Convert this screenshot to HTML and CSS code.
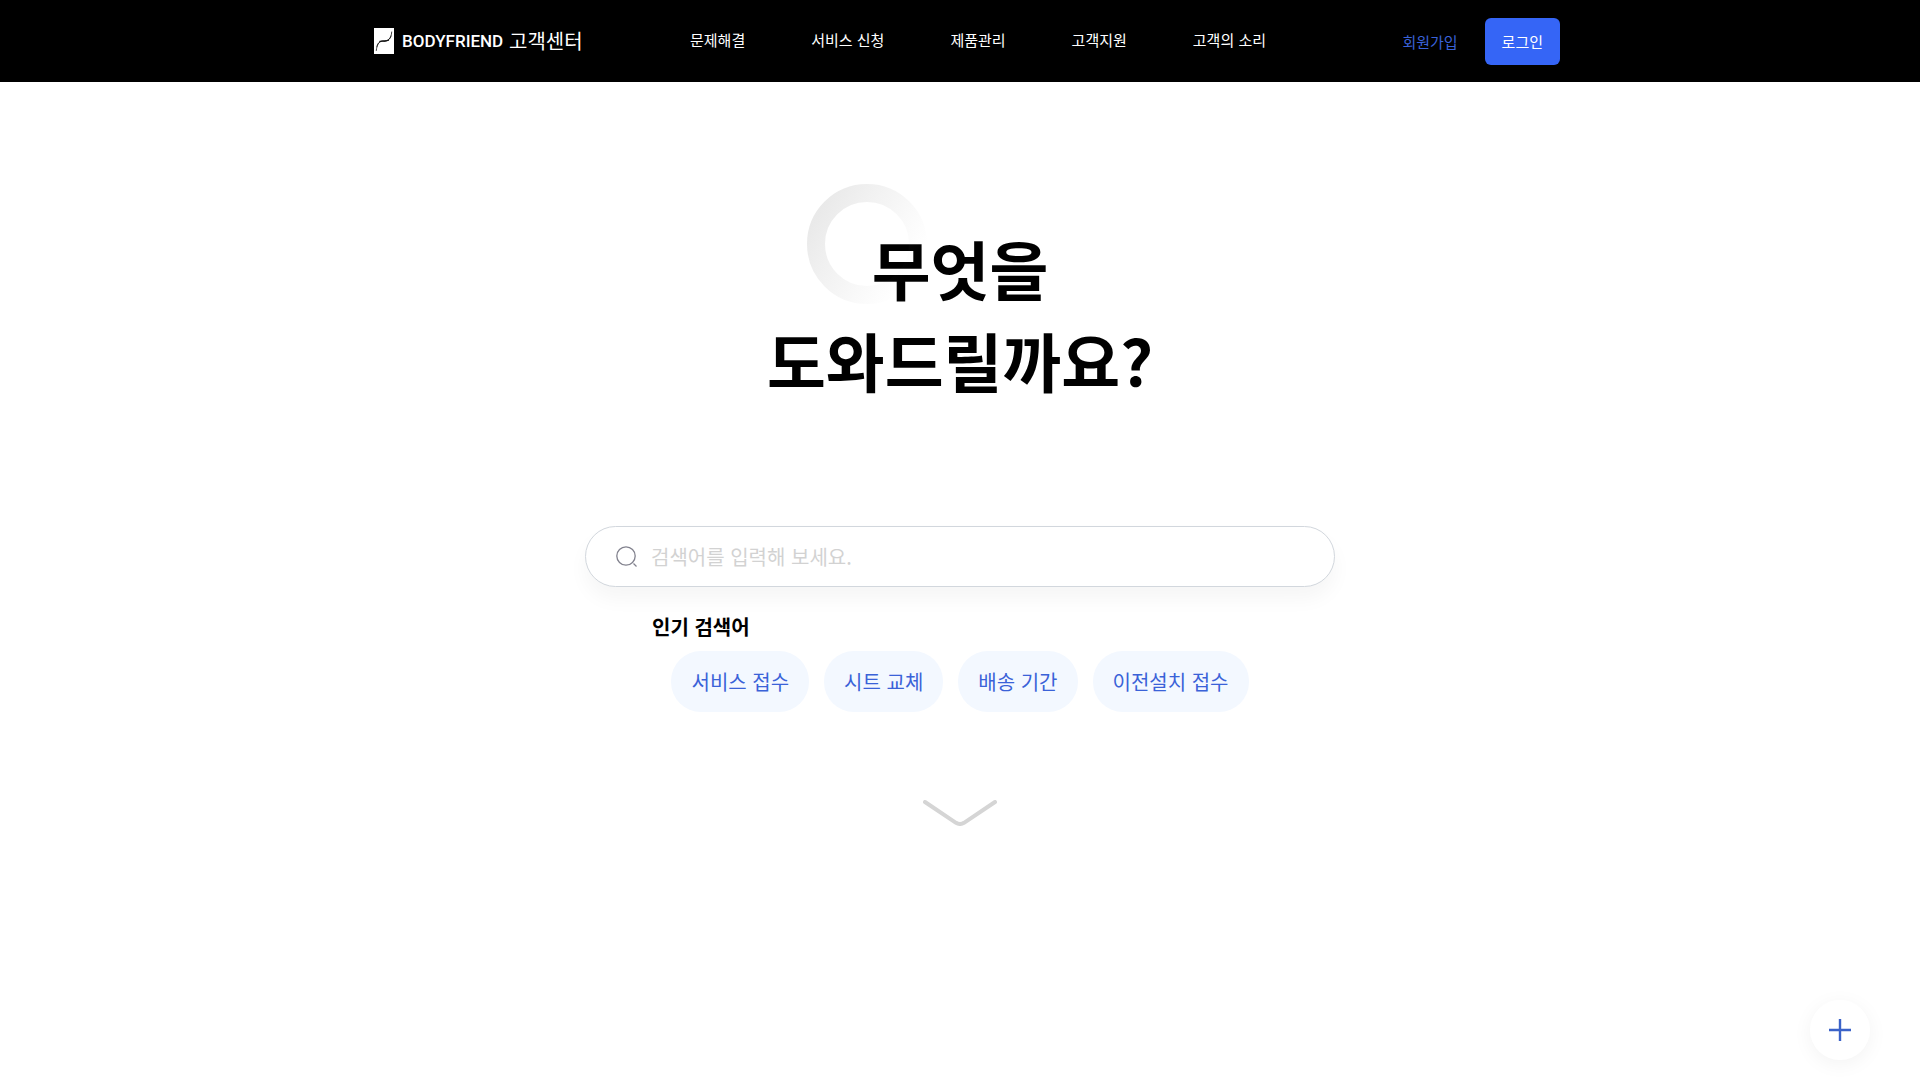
FILE: index.html
```html
<!DOCTYPE html>
<html lang="ko">

<head>
  <meta charset="UTF-8">
  <meta name="viewport" content="width=device-width, initial-scale=1.0">
  <title>BODYFRIEND 고객센터</title>
  <link rel="stylesheet" href="styles.css">
</head>

<body>
  <header class="header">
    <div class="header__inner">
      <a class="logo" href="#">
        <svg class="logo__mark" viewBox="0 0 20 26" aria-hidden="true">
          <rect width="20" height="26" fill="#fff" />
          <g fill="none" stroke="#111" stroke-linecap="round">
            <path d="M2.300 22.500C3 16.500 4.500 13.200 9 13C14 13 17.300 11 17.700 4" stroke-width=".8" />
            <path d="M3 18.500C4 14.500 6 13 10 13.200C14 13.200 16 11.500 17 8" stroke-width=".8" />
            <path d="M6 13.400C8 12.400 11.500 13.800 14.500 12.300" stroke-width="1.2" />
          </g>
        </svg>
        <span class="logo__name">BODYFRIEND</span>
        <span class="logo__sub">고객센터</span>
      </a>
      <nav class="nav">
        <a href="#">문제해결</a>
        <a href="#">서비스 신청</a>
        <a href="#">제품관리</a>
        <a href="#">고객지원</a>
        <a href="#">고객의 소리</a>
      </nav>
      <div class="member">
        <a class="member__join" href="#">회원가입</a>
        <button class="member__login" type="button">로그인</button>
      </div>
    </div>
  </header>

  <main class="main">
    <div class="title">
      <h1>무엇을<br>도와드릴까요?</h1>
      <svg class="title__ring" viewBox="0 0 120 120" aria-hidden="true">
        <defs>
          <linearGradient id="ring" x1="0" y1="0.25" x2="0.9" y2="0.8">
            <stop offset="0" stop-color="#888" stop-opacity=".18" />
            <stop offset=".5" stop-color="#999" stop-opacity=".1" />
            <stop offset="1" stop-color="#aaa" stop-opacity="0" />
          </linearGradient>
        </defs>
        <circle cx="60" cy="60" r="51" fill="none" stroke="url(#ring)" stroke-width="18" />
      </svg>
    </div>

    <form class="search">
      <label for="keyword" aria-label="검색">
        <svg class="search__icon" viewBox="0 0 21 21" fill="none" stroke="#82828e" stroke-width="1.3" aria-hidden="true">
          <circle cx="10" cy="10" r="9.200" />
          <path d="M17.500 17.500L20.500 20.500" />
        </svg>
      </label>
      <input id="keyword" type="text" placeholder="검색어를 입력해 보세요.">
    </form>

    <section class="popular">
      <h2>인기 검색어</h2>
      <div class="popular__list">
        <a href="#">서비스 접수</a>
        <a href="#">시트 교체</a>
        <a href="#">배송 기간</a>
        <a href="#">이전설치 접수</a>
      </div>
    </section>

    <svg class="arrow" viewBox="0 0 74 26" fill="none" stroke="#d5d5d5" stroke-width="4" stroke-linecap="round" aria-hidden="true">
      <path d="M2 2L33 22.800Q37 25.200 41 22.800L72 2" />
    </svg>
  </main>

  <button class="plus" type="button" aria-label="더보기">
    <svg viewBox="0 0 22 22" stroke="#3a62c8" stroke-width="2.4" aria-hidden="true">
      <path d="M11 0V22M0 11H22" />
    </svg>
  </button>
</body>

</html>
```
FILE: styles.css
```css
* {
  box-sizing: border-box;
  margin: 0;
  padding: 0;
}

body {
  min-height: 100vh;
  font-family: "Noto Sans CJK KR", sans-serif;
  color: #000;
  background-color: #fff;
}

a {
  color: inherit;
  text-decoration: none;
}

button,
input {
  border: 0;
  font-family: inherit;
}

svg {
  display: block;
}

.header {
  color: #fff;
  background-color: #000;
}

.header__inner {
  display: flex;
  align-items: center;
  max-width: 1200px;
  height: 82px;
  margin: 0 auto;
  padding-left: 14px;
}

.logo {
  display: flex;
  align-items: center;
  width: 316px;
}

.logo__mark {
  width: 20px;
  height: 26px;
  margin-right: 8px;
}

.logo__name {
  width: 107px;
  font-family: Roboto, sans-serif;
  font-size: 17px;
  font-weight: 500;
}

.logo__sub {
  font-size: 20px;
  line-height: 26px;
  font-weight: 400;
}

.nav {
  display: flex;
  gap: 66px;
  padding-bottom: 3px;
  font-size: 15px;
}

.member {
  display: flex;
  align-items: center;
  gap: 27px;
  margin-left: auto;
  font-size: 15px;
}

.member__join {
  color: #3a62d8;
}

.member__login {
  height: 47px;
  padding: 0 17px;
  border-radius: 6px;
  font-size: 15px;
  color: #fff;
  background-color: #3565f6;
}

.main {
  display: flex;
  flex-direction: column;
  align-items: center;
  padding: 139px 20px 0;
}

.title {
  position: relative;
}

.title h1 {
  font-size: 64px;
  line-height: 92px;
  font-weight: 700;
  text-align: center;
}

.title__ring {
  position: absolute;
  top: -37px;
  left: 40px;
  width: 120px;
}

.search {
  display: flex;
  align-items: center;
  gap: 14px;
  width: 100%;
  max-width: 750px;
  height: 61px;
  margin-top: 121px;
  padding: 0 30px;
  border: 1px solid #d2d7dd;
  border-radius: 31px;
  background-color: #fff;
  box-shadow: 0 12px 20px rgba(0, 0, 0, .04);
}

.search__icon {
  width: 21px;
}

.search input {
  flex: 1;
  min-width: 0;
  height: 40px;
  font-size: 20px;
  outline: none;
  background: none;
}

.search input::placeholder {
  color: #d2d2d2;
}

.popular {
  width: 100%;
  max-width: 616px;
  margin-top: 25px;
}

.popular h2 {
  font-size: 20px;
  line-height: 30px;
}

.popular__list {
  display: flex;
  flex-wrap: wrap;
  justify-content: center;
  gap: 15px;
  margin-top: 9px;
}

.popular__list a {
  padding: 0 20px;
  border-radius: 30px;
  font-size: 20px;
  line-height: 61px;
  color: #3a62d8;
  background-color: #f3f8ff;
}

.arrow {
  width: 74px;
  margin-top: 88px;
}

.plus {
  position: fixed;
  right: 50px;
  bottom: 20px;
  display: flex;
  align-items: center;
  justify-content: center;
  width: 60px;
  height: 60px;
  border-radius: 50%;
  background-color: #fff;
  box-shadow: 0 4px 20px rgba(0, 0, 0, .05);
}

.plus svg {
  width: 22px;
}
```
